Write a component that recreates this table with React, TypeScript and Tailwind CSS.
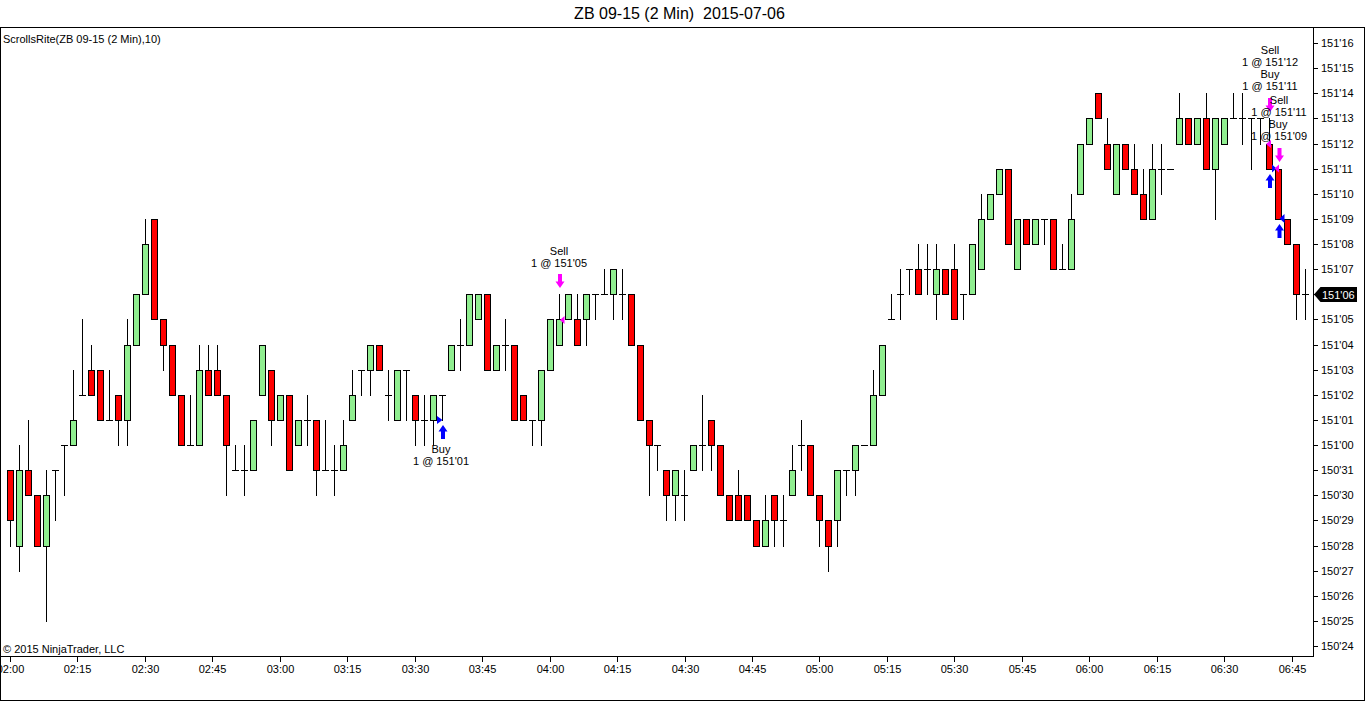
type Bar = [number, number, number, number];

// open, high, low, close in ticks above 150'24
const bars: Bar[] = [
  [7, 7, 4, 5], [4, 8, 3, 7], [7, 9, 6, 6], [6, 6, 4, 4], [4, 7, 1, 6], [7, 7, 5, 7], [8, 8, 6, 8], [8, 11, 8, 9], [10, 13, 10, 10], [11, 12, 10, 10],
  [11, 11, 9, 9], [9, 11, 9, 9], [10, 10, 8, 9], [9, 13, 8, 12], [12, 14, 12, 14], [14, 17, 14, 16], [17, 17, 13, 13], [13, 13, 11, 12], [12, 12, 10, 10], [10, 10, 8, 8],
  [8, 10, 8, 8], [8, 12, 8, 11], [11, 12, 10, 10], [11, 12, 10, 10], [10, 10, 6, 8], [7, 8, 7, 7], [7, 8, 6, 7], [7, 9, 7, 9], [10, 12, 10, 12], [11, 11, 8, 9],
  [9, 10, 9, 10], [10, 10, 7, 7], [8, 9, 8, 9], [9, 10, 8, 9], [9, 9, 6, 7], [7, 9, 7, 7], [7, 8, 6, 7], [7, 9, 7, 8], [9, 11, 9, 10], [11, 11, 10, 11],
  [11, 12, 10, 12], [12, 12, 11, 11], [10, 11, 9, 10], [9, 11, 9, 11], [11, 11, 9, 11], [10, 10, 8, 9], [9, 10, 8, 9], [9, 10, 8, 10], [10, 10, 9, 10], [11, 12, 11, 12],
  [12, 13, 11, 12], [12, 14, 12, 14], [13, 14, 13, 14], [14, 14, 11, 11], [11, 12, 11, 12], [12, 13, 11, 12], [12, 12, 9, 9], [10, 10, 9, 9], [9, 9, 8, 9], [9, 11, 8, 11],
  [11, 13, 11, 13], [12, 14, 12, 13], [13, 14, 13, 14], [13, 14, 12, 12], [13, 14, 12, 14], [14, 14, 13, 14], [14, 15, 14, 14], [14, 15, 13, 15], [14, 15, 13, 14], [14, 14, 12, 12],
  [12, 12, 9, 9], [9, 9, 6, 8], [8, 8, 7, 8], [7, 7, 5, 6], [6, 7, 5, 7], [6, 7, 5, 6], [7, 8, 7, 8], [8, 10, 7, 8], [9, 9, 7, 8], [8, 8, 6, 6],
  [6, 6, 5, 5], [6, 7, 5, 5], [6, 6, 5, 5], [5, 5, 4, 4], [4, 6, 4, 5], [6, 6, 4, 5], [5, 6, 4, 5], [6, 8, 6, 7], [8, 9, 7, 8], [8, 8, 6, 6],
  [6, 6, 4, 5], [5, 5, 3, 4], [5, 7, 4, 7], [7, 7, 6, 7], [7, 8, 6, 8], [8, 8, 8, 8], [8, 11, 8, 10], [10, 12, 10, 12], [13, 14, 13, 13], [14, 15, 13, 14],
  [15, 15, 14, 15], [15, 16, 14, 14], [15, 16, 14, 15], [14, 16, 13, 15], [15, 15, 14, 14], [15, 16, 13, 13], [14, 14, 13, 14], [14, 16, 14, 16], [15, 18, 15, 17], [17, 18, 17, 18],
  [18, 19, 18, 19], [19, 19, 16, 16], [15, 17, 15, 17], [17, 17, 16, 16], [16, 17, 16, 17], [17, 17, 16, 17], [17, 17, 15, 15], [15, 16, 15, 15], [15, 18, 15, 17], [18, 20, 18, 20],
  [20, 21, 20, 21], [22, 22, 21, 21], [20, 21, 19, 19], [18, 20, 18, 20], [20, 20, 19, 19], [19, 20, 18, 18], [18, 19, 17, 17], [17, 20, 17, 19], [19, 20, 18, 19], [19, 19, 19, 19],
  [20, 22, 20, 21], [21, 21, 20, 20], [20, 21, 20, 21], [21, 22, 19, 19], [19, 21, 17, 21], [20, 21, 20, 21], [21, 22, 21, 21], [21, 22, 20, 21], [21, 21, 19, 21], [21, 21, 20, 21],
  [20, 21, 19, 19], [19, 19, 17, 17], [17, 17, 16, 16], [16, 16, 13, 14], [14, 15, 13, 14],
];

const py = (p: number) => Math.round(646 - p * 25.125);
const bx = (i: number) => Math.round(10 + 8.993 * i);

const priceLabel = (p: number) => {
  const v = 24 + p;
  return v >= 32 ? `151'${String(v - 32).padStart(2, "0")}` : `150'${v}`;
};

const times = Array.from({ length: 20 }, (_, k) => {
  const m = 120 + k * 15;
  return `${String(Math.floor(m / 60)).padStart(2, "0")}:${String(m % 60).padStart(2, "0")}`;
});

function Candle({ i, bar }: { i: number; bar: Bar }) {
  const [o, h, l, c] = bar;
  const x = bx(i);
  const top = py(Math.max(o, c));
  const bot = py(Math.min(o, c));
  return (
    <g>
      {h !== l && <line x1={x + 0.5} x2={x + 0.5} y1={py(h)} y2={py(l) + 1} stroke="#000" />}
      {o === c ? (
        <line x1={x - 3} x2={x + 4} y1={top + 0.5} y2={top + 0.5} stroke="#000" />
      ) : (
        <rect
          x={x - 2.5}
          y={top + 0.5}
          width={6}
          height={bot - top}
          fill={c > o ? "#90ee90" : "#ff0000"}
          stroke="#000"
        />
      )}
    </g>
  );
}

function UpArrow({ cx, y }: { cx: number; y: number }) {
  const pts = [
    [cx, y], [cx + 4.5, y + 6.5], [cx + 2, y + 6.5], [cx + 2, y + 14],
    [cx - 2, y + 14], [cx - 2, y + 6.5], [cx - 4.5, y + 6.5],
  ];
  return <polygon points={pts.map((p) => p.join(",")).join(" ")} fill="#0000ff" />;
}

function DownArrow({ cx, y }: { cx: number; y: number }) {
  // y is the tip at the bottom
  const pts = [
    [cx, y], [cx + 4.5, y - 6.5], [cx + 2, y - 6.5], [cx + 2, y - 14],
    [cx - 2, y - 14], [cx - 2, y - 6.5], [cx - 4.5, y - 6.5],
  ];
  return <polygon points={pts.map((p) => p.join(",")).join(" ")} fill="#ff00ff" />;
}

const notes: { x: number; y: number; t: string }[] = [
  { x: 441, y: 453, t: "Buy" },
  { x: 441, y: 465, t: "1 @ 151'01" },
  { x: 559, y: 255, t: "Sell" },
  { x: 559, y: 267, t: "1 @ 151'05" },
  { x: 1270, y: 54, t: "Sell" },
  { x: 1270, y: 66, t: "1 @ 151'12" },
  { x: 1270, y: 78, t: "Buy" },
  { x: 1270, y: 90, t: "1 @ 151'11" },
  { x: 1279, y: 104, t: "Sell" },
  { x: 1279, y: 116, t: "1 @ 151'11" },
  { x: 1278, y: 128, t: "Buy" },
  { x: 1279, y: 140, t: "1 @ 151'09" },
];

function PlotArea() {
  return (
    <svg width={1312} height={628} viewBox="1 28 1312 628" className="block">
      <g shapeRendering="crispEdges">
        {bars.map((b, i) => (
          <Candle key={i} i={i} bar={b} />
        ))}
      </g>

      {/* trade markers */}
      <polygon points="437,416 442.5,420 437,424" fill="#0000ff" />
      <UpArrow cx={443} y={425} />

      <DownArrow cx={560} y={288} />
      <polygon points="564.5,316 560,320 564.5,324" fill="#ff00ff" />

      <DownArrow cx={1270} y={112} />
      <polygon points="1271,140 1266,144 1271,148" fill="#ff00ff" />
      <DownArrow cx={1279.5} y={162} />
      <polygon points="1272,164.5 1276.5,168.5 1272,172.5" fill="#0000ff" />
      <polygon points="1279,164.5 1274.5,168.5 1279,172.5" fill="#ff00ff" />
      <UpArrow cx={1270} y={174} />
      <polygon points="1284.5,214 1279.5,218.5 1284.5,223" fill="#0000ff" />
      <UpArrow cx={1279.5} y={224} />

      {notes.map((n, i) => (
        <text key={i} x={n.x} y={n.y} fontSize={11} textAnchor="middle" fill="#000">
          {n.t}
        </text>
      ))}
    </svg>
  );
}

function PriceAxis() {
  const levels = Array.from({ length: 25 }, (_, p) => p);
  return (
    <svg width={50} height={629} viewBox="1314 28 50 629" className="block">
      {levels.map((p) => (
        <g key={p}>
          <line x1={1314} x2={1318} y1={py(p) + 0.5} y2={py(p) + 0.5} stroke="#000" shapeRendering="crispEdges" />
          {p !== 14 && (
            <text x={1321} y={py(p) + 4} fontSize={11} fill="#000">
              {priceLabel(p)}
            </text>
          )}
        </g>
      ))}
      <polygon points="1314,294.5 1320.5,287 1357,287 1357,302 1320.5,302" fill="#000" />
      <text x={1322} y={298.5} fontSize={11} fill="#fff">
        151'06
      </text>
    </svg>
  );
}

function TimeAxis() {
  return (
    <svg width={1363} height={43} viewBox="1 657 1363 43" className="block">
      {times.map((t, k) => {
        const x = Math.round(10 + 67.45 * k);
        return (
          <g key={t}>
            <line x1={x + 0.5} x2={x + 0.5} y1={657} y2={662} stroke="#000" shapeRendering="crispEdges" />
            <text x={x + 0.5} y={673} fontSize={11} textAnchor="middle" fill="#000">
              {t}
            </text>
          </g>
        );
      })}
    </svg>
  );
}

export default function App() {
  return (
    <div className="flex h-[702px] w-[1366px] flex-col bg-white font-['Liberation_Sans',Arial,sans-serif] text-black">
      <div className="flex h-[27px] items-center justify-center whitespace-pre pr-[7px] pt-[1px] text-[16px] leading-none">
        ZB 09-15 (2 Min)  2015-07-06
      </div>
      <div className="flex h-[674px] w-[1365px] flex-col border border-black">
        <div className="flex h-[629px]">
          <div className="relative h-[629px] w-[1313px] border-b border-r border-black">
            <PlotArea />
            <div className="absolute left-[2px] top-[6px] text-[11px] leading-[11px]">
              ScrollsRite(ZB 09-15 (2 Min),10)
            </div>
            <div className="absolute left-[2px] top-[616px] text-[11px] leading-[11px]">
              © 2015 NinjaTrader, LLC
            </div>
          </div>
          <PriceAxis />
        </div>
        <TimeAxis />
      </div>
    </div>
  );
}
